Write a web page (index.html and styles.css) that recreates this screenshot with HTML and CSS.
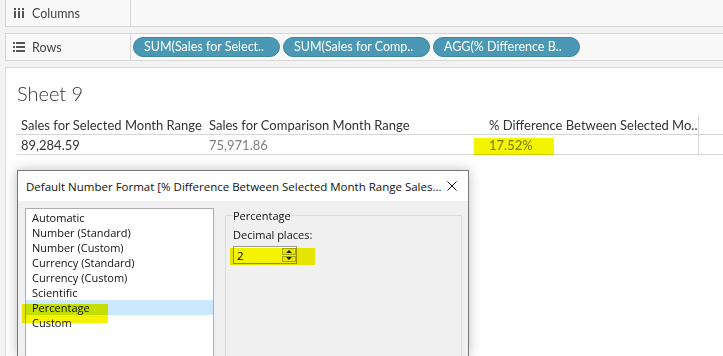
FILE: index.html
```html
<!DOCTYPE html>
<html lang="en">
<head>
    <meta charset="UTF-8">
    <title>Sheet 9</title>
    <link rel="stylesheet" href="styles.css">
</head>
<body>

<!-- shelves -->
<div class="shelves">
    <div class="shelf">
        <div class="shelf-label">
            <svg class="shelf-icon" width="12" height="10" viewBox="0 0 12 10">
                <rect x="1" y="0" width="2" height="2" fill="#555"/>
                <rect x="5" y="0" width="2" height="2" fill="#555"/>
                <rect x="9" y="0" width="2" height="2" fill="#555"/>
                <rect x="1" y="3" width="2" height="7" fill="#555"/>
                <rect x="5" y="3" width="2" height="7" fill="#555"/>
                <rect x="9" y="3" width="2" height="7" fill="#555"/>
            </svg>
            Columns
        </div>
        <div class="shelf-drop"></div>
    </div>
    <div class="shelf">
        <div class="shelf-label">
            <svg class="shelf-icon" width="12" height="10" viewBox="0 0 12 10">
                <rect x="0" y="0" width="2" height="2" fill="#555"/>
                <rect x="0" y="4" width="2" height="2" fill="#555"/>
                <rect x="0" y="8" width="2" height="2" fill="#555"/>
                <rect x="3" y="0" width="9" height="2" fill="#555"/>
                <rect x="3" y="4" width="9" height="2" fill="#555"/>
                <rect x="3" y="8" width="9" height="2" fill="#555"/>
            </svg>
            Rows
        </div>
        <div class="shelf-drop">
            <span class="pill">SUM(Sales for Select..</span>
            <span class="pill">SUM(Sales for Comp..</span>
            <span class="pill">AGG(% Difference B..</span>
        </div>
    </div>
</div>

<!-- sheet -->
<div class="sheet">
    <h1 class="sheet-title">Sheet 9</h1>
    <div class="grid">
        <div class="cell head">Sales for Selected Month Range</div>
        <div class="cell head">Sales for Comparison Month Range</div>
        <div class="cell head last">% Difference Between Selected Mo..</div>
        <div class="cell head"></div>

        <div class="cell value">89,284.59</div>
        <div class="cell value muted">75,971.86</div>
        <div class="cell value muted last">17.52%</div>
        <div class="cell value"></div>
    </div>
    <span class="marker marker-value"></span>
</div>

<!-- dialog -->
<div class="dialog">
    <div class="dialog-title">
        <span>Default Number Format [% Difference Between Selected Month Range Sales...</span>
        <svg class="close" width="10" height="10" viewBox="0 0 10 10">
            <path d="M0.5 0.5 L9.5 9.5 M9.5 0.5 L0.5 9.5" stroke="#111" stroke-width="1" fill="none"/>
        </svg>
    </div>
    <div class="dialog-body">
        <ul class="listbox">
            <li>Automatic</li>
            <li>Number (Standard)</li>
            <li>Number (Custom)</li>
            <li>Currency (Standard)</li>
            <li>Currency (Custom)</li>
            <li>Scientific</li>
            <li class="selected">Percentage</li>
            <li>Custom</li>
        </ul>
        <fieldset class="group">
            <legend>Percentage</legend>
            <label class="field-label" for="decimals">Decimal places:</label>
            <div class="spin">
                <input type="text" id="decimals" value="2">
                <div class="spin-buttons">
                    <span class="spin-btn"><i class="arrow-up"></i></span>
                    <span class="spin-btn"><i class="arrow-down"></i></span>
                </div>
            </div>
        </fieldset>
    </div>
    <span class="marker marker-list"></span>
    <span class="marker marker-spin"></span>
</div>

</body>
</html>
```

FILE: styles.css
```css
* {
    box-sizing: border-box;
}

body {
    margin: 0;
    width: 723px;
    height: 356px;
    overflow: hidden;
    background-color: #f3f3f3;
    font-family: Lato, "Open Sans", sans-serif;
    position: relative;
}

/* shelves */
.shelves {
    padding-left: 5px;
}

.shelf {
    display: flex;
    height: 27px;
    border: 1px solid #d6d6d6;
    border-right: none;
    background-color: #f9f9f9;
}

.shelf:first-child {
    border-top: none;
    height: 27px;
}

.shelf + .shelf {
    margin-top: 6px;
    height: 28px;
}

.shelf-label {
    width: 125px;
    display: flex;
    align-items: center;
    gap: 7px;
    padding-left: 7px;
    font-size: 12.5px;
    color: #444;
    border-right: 1px solid #d6d6d6;
}

.shelf-drop {
    flex: 1;
    display: flex;
    align-items: center;
    gap: 3px;
    padding-left: 2px;
}

.pill {
    width: 147px;
    height: 20px;
    border-radius: 10px;
    background-color: #4a98b4;
    border: 1px solid #3f869f;
    color: #fff;
    font-size: 12.5px;
    line-height: 18px;
    padding-left: 10px;
    white-space: nowrap;
}

/* sheet */
.sheet {
    position: relative;
    margin-top: 6px;
    margin-left: 5px;
    height: 289px;
    background-color: #fff;
    border-top: 1px solid #d6d6d6;
    border-left: 1px solid #e2e2e2;
    padding-left: 10px;
}

.sheet-title {
    margin: 13px 0 0 1px;
    font-size: 20px;
    line-height: 24px;
    font-weight: 300;
    color: #333;
}

.grid {
    display: grid;
    grid-template-columns: 188px 280px 215px 1fr;
    margin-top: 10px;
}

.cell {
    height: 20px;
    padding-left: 5px;
    font-size: 13px;
    line-height: 20px;
    color: #333;
    border-bottom: 1px solid #d6d6d6;
    white-space: nowrap;
    overflow: hidden;
}

.cell.last {
    border-right: 1px solid #d6d6d6;
}

.cell.muted {
    color: #808080;
}

/* highlighter marks */
.marker {
    position: absolute;
    background-color: #f4f400;
    mix-blend-mode: multiply;
}

.marker-value {
    left: 468px;
    top: 70px;
    width: 80px;
    height: 17px;
}

.marker-list {
    left: 4px;
    top: 133px;
    width: 86px;
    height: 19px;
}

.marker-spin {
    left: 212px;
    top: 77px;
    width: 85px;
    height: 17px;
}

/* dialog */
.dialog {
    position: absolute;
    left: 17px;
    top: 170px;
    width: 452px;
    height: 186px;
    overflow: hidden;
    border: 1px solid #777;
    border-bottom: none;
    background-color: #f0f0f0;
    box-shadow: 0 0 12px rgba(0, 0, 0, 0.25);
    font-family: "Open Sans", "Noto Sans", sans-serif;
    font-size: 11px;
    color: #111;
}

.dialog-title {
    height: 30px;
    background-color: #fff;
    display: flex;
    align-items: center;
    justify-content: space-between;
    padding: 0 11px 0 8px;
    font-size: 11.5px;
    white-space: nowrap;
}

.dialog-body {
    display: flex;
    gap: 11px;
    padding: 7px 6px 0 7px;
}

.listbox {
    width: 189px;
    height: 160px;
    margin: 0;
    padding: 1px 0 0 0;
    list-style: none;
    background-color: #fff;
    border: 1px solid #adadad;
}

.listbox li {
    height: 15px;
    line-height: 15px;
    padding-left: 6px;
}

.listbox li.selected {
    background-color: #cce8ff;
}

.group {
    flex: 1;
    margin: 0;
    padding: 0 7px;
    border: 1px solid #dcdcdc;
    height: 160px;
}

.group legend {
    padding: 0;
    font-size: 11px;
    line-height: 15px;
}

.field-label {
    display: block;
    margin-top: 4px;
    line-height: 15px;
}

.spin {
    display: flex;
    width: 64px;
    height: 18px;
    margin-top: 4px;
    border: 1px solid #9b9b9b;
    background-color: #fff;
}

.spin input {
    width: 48px;
    border: none;
    padding: 0 0 0 3px;
    font-family: inherit;
    font-size: 11.5px;
    background: transparent;
    outline: none;
}

.spin-buttons {
    display: flex;
    flex-direction: column;
    gap: 1px;
    padding: 1px 1px 1px 0;
}

.spin-btn {
    width: 14px;
    flex: 1;
    border: 1px solid #adadad;
    background-color: #f0f0f0;
    display: flex;
    align-items: center;
    justify-content: center;
}

.arrow-up {
    border-left: 3px solid transparent;
    border-right: 3px solid transparent;
    border-bottom: 3px solid #222;
}

.arrow-down {
    border-left: 3px solid transparent;
    border-right: 3px solid transparent;
    border-top: 3px solid #222;
}
```
